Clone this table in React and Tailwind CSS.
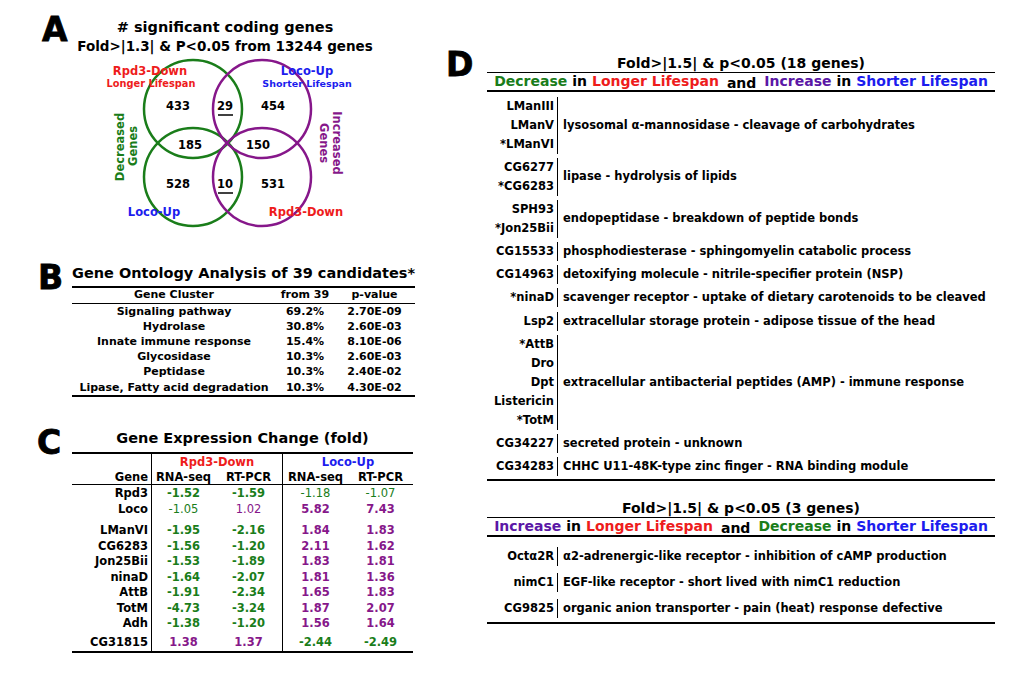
import React from 'react';

const GREEN = '#1a7d1a';
const PURPLE = '#86178a';

const goRows = [
  ['Signaling pathway', '69.2%', '2.70E-09'],
  ['Hydrolase', '30.8%', '2.60E-03'],
  ['Innate immune response', '15.4%', '8.10E-06'],
  ['Glycosidase', '10.3%', '2.60E-03'],
  ['Peptidase', '10.3%', '2.40E-02'],
  ['Lipase, Fatty acid degradation', '10.3%', '4.30E-02'],
];

// g = green bold, gn = green normal, p = purple bold, pn = purple normal
const exprRows = [
  { gene: 'Rpd3', pad: 'pt-[1.5px]', v: [['-1.52', 'g'], ['-1.59', 'g'], ['-1.18', 'gn'], ['-1.07', 'gn']] },
  { gene: 'Loco', pad: '', v: [['-1.05', 'gn'], ['1.02', 'pn'], ['5.82', 'p'], ['7.43', 'p']] },
  { gene: 'LManVI', pad: 'pt-[6px]', v: [['-1.95', 'g'], ['-2.16', 'g'], ['1.84', 'p'], ['1.83', 'p']] },
  { gene: 'CG6283', pad: '', v: [['-1.56', 'g'], ['-1.20', 'g'], ['2.11', 'p'], ['1.62', 'p']] },
  { gene: 'Jon25Bii', pad: '', v: [['-1.53', 'g'], ['-1.89', 'g'], ['1.83', 'p'], ['1.81', 'p']] },
  { gene: 'ninaD', pad: '', v: [['-1.64', 'g'], ['-2.07', 'g'], ['1.81', 'p'], ['1.36', 'p']] },
  { gene: 'AttB', pad: '', v: [['-1.91', 'g'], ['-2.34', 'g'], ['1.65', 'p'], ['1.83', 'p']] },
  { gene: 'TotM', pad: '', v: [['-4.73', 'g'], ['-3.24', 'g'], ['1.87', 'p'], ['2.07', 'p']] },
  { gene: 'Adh', pad: '', v: [['-1.38', 'g'], ['-1.20', 'g'], ['1.56', 'p'], ['1.64', 'p']] },
  { gene: 'CG31815', pad: 'pt-[3.5px]', v: [['1.38', 'p'], ['1.37', 'p'], ['-2.44', 'g'], ['-2.49', 'g']] },
];

const tone = {
  g: 'text-[#1a7d1a] font-bold',
  gn: 'text-[#1a7d1a] font-normal',
  p: 'text-[#86178a] font-bold',
  pn: 'text-[#86178a] font-normal',
};

const decreaseGroups = [
  { genes: ['LManIII', 'LManV', '*LManVI'], desc: 'lysosomal α-mannosidase - cleavage of carbohydrates' },
  { genes: ['CG6277', '*CG6283'], desc: 'lipase - hydrolysis of lipids' },
  { genes: ['SPH93', '*Jon25Bii'], desc: 'endopeptidase - breakdown of peptide bonds' },
  { genes: ['CG15533'], desc: 'phosphodiesterase - sphingomyelin catabolic process' },
  { genes: ['CG14963'], desc: 'detoxifying molecule - nitrile-specifier protein (NSP)' },
  { genes: ['*ninaD'], desc: 'scavenger receptor - uptake of dietary carotenoids to be cleaved' },
  { genes: ['Lsp2'], desc: 'extracellular storage protein - adipose tissue of the head' },
  { genes: ['*AttB', 'Dro', 'Dpt', 'Listericin', '*TotM'], desc: 'extracellular antibacterial peptides (AMP) - immune response' },
  { genes: ['CG34227'], desc: 'secreted protein - unknown' },
  { genes: ['CG34283'], desc: 'CHHC U11-48K-type zinc finger - RNA binding module' },
];

const increaseGroups = [
  { genes: ['Octα2R'], desc: 'α2-adrenergic-like receptor - inhibition of cAMP production' },
  { genes: ['nimC1'], desc: 'EGF-like receptor - short lived with nimC1 reduction' },
  { genes: ['CG9825'], desc: 'organic anion transporter - pain (heat) response defective' },
];

function PanelLetter({ children, className }) {
  return (
    <div className={`text-[33px] leading-none font-bold [-webkit-text-stroke:0.8px_#000] ${className}`}>
      {children}
    </div>
  );
}

function Venn() {
  return (
    <svg width="440" height="190" viewBox="0 55 440 190" className="block">
      <g fill="none" strokeWidth="2.5">
        <circle cx="193" cy="109" r="49" stroke={GREEN} />
        <circle cx="193" cy="177" r="49" stroke={GREEN} />
        <circle cx="262" cy="109" r="49" stroke={PURPLE} />
        <circle cx="262" cy="177" r="49" stroke={PURPLE} />
      </g>
      <g textAnchor="middle" fontWeight="bold">
        <text x="150" y="75" fontSize="11.5" fill="#ee1c1c">Rpd3-Down</text>
        <text x="151" y="86.5" fontSize="9.8" fill="#ee1c1c">Longer Lifespan</text>
        <text x="307" y="75" fontSize="11.5" fill="#1c1cee">Loco-Up</text>
        <text x="307" y="86.5" fontSize="9.5" fill="#1c1cee">Shorter Lifespan</text>

        <text x="178" y="110" fontSize="11.5">433</text>
        <text x="225" y="110" fontSize="11.5">29</text>
        <text x="273" y="110" fontSize="11.5">454</text>
        <text x="190" y="149" fontSize="11.5">185</text>
        <text x="258" y="149" fontSize="11.5">150</text>
        <text x="178" y="188" fontSize="11.5">528</text>
        <text x="225" y="188" fontSize="11.5">10</text>
        <text x="273" y="188" fontSize="11.5">531</text>

        <text x="154" y="216" fontSize="11.5" fill="#1c1cee">Loco-Up</text>
        <text x="306" y="216" fontSize="11.5" fill="#ee1c1c">Rpd3-Down</text>

        <text transform="translate(124 147) rotate(-90)" fontSize="11.5" fill={GREEN}>Decreased</text>
        <text transform="translate(137 146) rotate(-90)" fontSize="11.5" fill={GREEN}>Genes</text>
        <text transform="translate(333 143) rotate(90)" fontSize="11.5" fill={PURPLE}>Increased</text>
        <text transform="translate(320 143) rotate(90)" fontSize="11.5" fill={PURPLE}>Genes</text>
      </g>
      <line x1="218" y1="115" x2="233" y2="115" stroke="#000" strokeWidth="1.5" />
      <line x1="218" y1="193" x2="233" y2="193" stroke="#000" strokeWidth="1.5" />
    </svg>
  );
}

function GeneBlock({ title, subtitle, groups, gap, top, bottom }) {
  return (
    <div>
      <div className="text-[14px] leading-[18px] text-center border-b-[1.5px] border-black">{title}</div>
      <div className="h-[17px] flex items-center justify-center text-[14px] whitespace-nowrap border-b-[2.5px] border-black box-content">
        {subtitle}
      </div>
      <div className={`flex flex-col ${gap} ${top} ${bottom} text-[11.5px] border-b-[2.5px] border-black`}>
        {groups.map((g, i) => (
          <div key={i} className="flex">
            <div className="w-[71px] text-right pr-[3px] border-r-[1.5px] border-black leading-[19px] whitespace-nowrap">
              {g.genes.map((n) => (
                <div key={n}>{n}</div>
              ))}
            </div>
            <div className="pl-[5px] self-center leading-[19px] whitespace-nowrap">{g.desc}</div>
          </div>
        ))}
      </div>
    </div>
  );
}

export default function App() {
  return (
    <div className="w-[1020px] h-[676px] bg-white text-black font-bold font-['DejaVu_Sans',sans-serif] flex overflow-hidden">
      {/* left column: A, B, C */}
      <div className="w-[440px] flex flex-col">
        <div className="h-[250px] flex flex-col">
          <div className="h-[55px] flex">
            <PanelLetter className="w-[72px] pl-[42px] pt-[13px]">A</PanelLetter>
            <div className="w-[306px] flex flex-col items-center pt-[17.5px] whitespace-nowrap">
              <div className="text-[14.5px] leading-[18px]"># significant coding genes</div>
              <div className="text-[13.5px] leading-[18px] mt-[1.5px]">Fold&gt;|1.3| &amp; P&lt;0.05 from 13244 genes</div>
            </div>
          </div>
          <Venn />
        </div>

        <div className="h-[155px] flex">
          <PanelLetter className="w-[72px] pl-[38px] pt-[11px]">B</PanelLetter>
          <div className="w-[343px] pt-[13.5px]">
            <div className="text-[14.5px] leading-[18px] text-center whitespace-nowrap">Gene Ontology Analysis of 39 candidates*</div>
            <div className="mt-[4.5px] border-t-[2.5px] border-b-[2.5px] border-black text-[11px] pb-[0.5px]">
              <div className="grid grid-cols-[204px_58px_81px] h-[14.5px] items-center text-center border-b-[1.5px] border-black box-content leading-[14px]">
                <div>Gene Cluster</div>
                <div>from 39</div>
                <div>p-value</div>
              </div>
              {goRows.map((r) => (
                <div key={r[0]} className="grid grid-cols-[204px_58px_81px] h-[15.2px] items-center text-center leading-[15px] whitespace-nowrap">
                  <div>{r[0]}</div>
                  <div>{r[1]}</div>
                  <div>{r[2]}</div>
                </div>
              ))}
            </div>
          </div>
        </div>

        <div className="h-[271px] flex">
          <PanelLetter className="w-[72px] pl-[37px] pt-[21px]">C</PanelLetter>
          <div className="w-[341px] pt-[24.4px]">
            <div className="text-[14.5px] leading-[18px] text-center whitespace-nowrap">Gene Expression Change (fold)</div>
            <div className="mt-[4.6px] border-t-[2.5px] border-b-[2.5px] border-black text-[11.5px] whitespace-nowrap">
              <div className="grid grid-cols-[80px_131px_130px] h-[15px] leading-[16px] text-center">
                <div className="border-r-[1.5px] border-black"></div>
                <div className="border-r-[1.5px] border-black text-[#ee1c1c]">Rpd3-Down</div>
                <div className="text-[#1c1cee]">Loco-Up</div>
              </div>
              <div className="grid grid-cols-[80px_63px_68px_65px_65px] h-[15px] leading-[16px] text-center border-b-[1.5px] border-black box-content">
                <div className="border-r-[1.5px] border-black text-right pr-[3px]">Gene</div>
                <div>RNA-seq</div>
                <div className="border-r-[1.5px] border-black">RT-PCR</div>
                <div>RNA-seq</div>
                <div>RT-PCR</div>
              </div>
              {exprRows.map((r) => (
                <div key={r.gene} className="grid grid-cols-[80px_63px_68px_65px_65px] leading-[15.5px] text-center">
                  <div className={`border-r-[1.5px] border-black text-right pr-[3px] ${r.pad}`}>{r.gene}</div>
                  <div className={`${r.pad} ${tone[r.v[0][1]]}`}>{r.v[0][0]}</div>
                  <div className={`border-r-[1.5px] border-black ${r.pad} ${tone[r.v[1][1]]}`}>{r.v[1][0]}</div>
                  <div className={`${r.pad} ${tone[r.v[2][1]]}`}>{r.v[2][0]}</div>
                  <div className={`${r.pad} ${tone[r.v[3][1]]}`}>{r.v[3][0]}</div>
                </div>
              ))}
            </div>
          </div>
        </div>
      </div>

      {/* right column: D */}
      <div className="flex pl-[6px] pt-[48px]">
        <PanelLetter className="w-[41px]">D</PanelLetter>
        <div className="w-[508px] pt-[5.5px] flex flex-col gap-[18px]">
          <GeneBlock
            title="Fold>|1.5| & p<0.05 (18 genes)"
            subtitle={
              <>
                <span className="text-[#1a7d1a]">Decrease</span>
                <span className="ml-[5px]">in</span>
                <span className="ml-[5px] text-[#ee1c1c]">Longer Lifespan</span>
                <span className="mx-[8px] translate-y-[2px]">and</span>
                <span className="text-[#5b17a6]">Increase</span>
                <span className="ml-[5px]">in</span>
                <span className="ml-[5px] text-[#1c1cee]">Shorter Lifespan</span>
              </>
            }
            groups={decreaseGroups}
            gap="gap-[4.2px]"
            top="pt-[5px]"
            bottom="pb-[2.5px]"
          />
          <GeneBlock
            title="Fold>|1.5| & p<0.05 (3 genes)"
            subtitle={
              <>
                <span className="text-[#5b17a6]">Increase</span>
                <span className="ml-[5px]">in</span>
                <span className="ml-[5px] text-[#ee1c1c]">Longer Lifespan</span>
                <span className="mx-[8px] translate-y-[2px]">and</span>
                <span className="text-[#1a7d1a]">Decrease</span>
                <span className="ml-[5px]">in</span>
                <span className="ml-[5px] text-[#1c1cee]">Shorter Lifespan</span>
              </>
            }
            groups={increaseGroups}
            gap="gap-[7px]"
            top="pt-[10px]"
            bottom="pb-[4.5px]"
          />
        </div>
      </div>
    </div>
  );
}
